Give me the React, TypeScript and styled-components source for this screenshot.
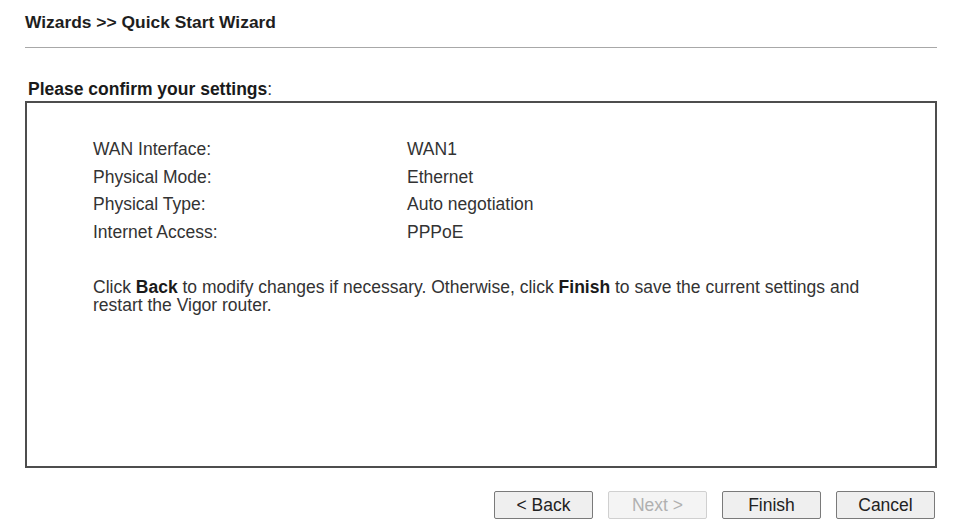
import React from 'react';
import styled, { createGlobalStyle } from 'styled-components';

const GlobalStyle = createGlobalStyle`
  *, *::before, *::after {
    box-sizing: border-box;
  }

  body {
    margin: 0;
    background: #ffffff;
    font-family: "Liberation Sans", Arial, sans-serif;
    color: #222222;
  }
`;

interface Setting {
  label: string;
  value: string;
}

const settings: Setting[] = [
  { label: 'WAN Interface:', value: 'WAN1' },
  { label: 'Physical Mode:', value: 'Ethernet' },
  { label: 'Physical Type:', value: 'Auto negotiation' },
  { label: 'Internet Access:', value: 'PPPoE' },
];

const App: React.FC = () => {
  return (
    <Page>
      <GlobalStyle />
      <Title>Wizards &gt;&gt; Quick Start Wizard</Title>
      <Rule />
      <SectionLabel>
        <strong>Please confirm your settings</strong>:
      </SectionLabel>
      <Panel>
        <SettingsGrid>
          {settings.map((s) => (
            <React.Fragment key={s.label}>
              <Label>{s.label}</Label>
              <Value>{s.value}</Value>
            </React.Fragment>
          ))}
        </SettingsGrid>
        <Note>
          Click <strong>Back</strong> to modify changes if necessary. Otherwise, click{' '}
          <strong>Finish</strong> to save the current settings and restart the Vigor router.
        </Note>
      </Panel>
      <ButtonRow>
        <Button>&lt; Back</Button>
        <Button disabled>Next &gt;</Button>
        <Button>Finish</Button>
        <Button>Cancel</Button>
      </ButtonRow>
    </Page>
  );
};

const Page = styled.div`
  padding: 12px 24px 0 25px;
`;

const Title = styled.h1`
  margin: 0;
  font-size: 17.4px;
  font-weight: bold;
  color: #1e1e1e;
  line-height: 20px;
`;

const Rule = styled.div`
  height: 1px;
  background: #a8a8a8;
  margin-top: 15px;
`;

const SectionLabel = styled.div`
  margin-top: 31px;
  padding-left: 3px;
  font-size: 17.5px;
  line-height: 20px;
  color: #333333;

  strong {
    color: #1a1a1a;
  }
`;

const Panel = styled.div`
  margin-top: 2px;
  height: 367px;
  border: 2px solid #4d4d4d;
  padding: 33px 0 0 66px;
`;

const SettingsGrid = styled.div`
  display: grid;
  grid-template-columns: 314px auto;
  grid-auto-rows: 27.6px;
  align-items: center;
`;

const Label = styled.div`
  font-size: 17.5px;
  color: #333333;
`;

const Value = styled(Label)``;

const Note = styled.p`
  margin: 33px 0 0;
  max-width: 800px;
  font-size: 17.5px;
  line-height: 17.5px;
  color: #333333;

  strong {
    color: #1a1a1a;
  }
`;

const ButtonRow = styled.div`
  display: flex;
  justify-content: flex-end;
  gap: 15px;
  margin-top: 23px;
  padding-right: 2px;
`;

const Button = styled.button`
  width: 99px;
  height: 28px;
  border: 1px solid #7a7a7a;
  border-radius: 2px;
  background: #efefef;
  font-family: "Liberation Sans", Arial, sans-serif;
  font-size: 17.5px;
  color: #222222;
  padding: 0;

  &:disabled {
    border-color: #d0d0d0;
    background: #f4f4f4;
    color: #b0b0b0;
  }
`;

export default App;
